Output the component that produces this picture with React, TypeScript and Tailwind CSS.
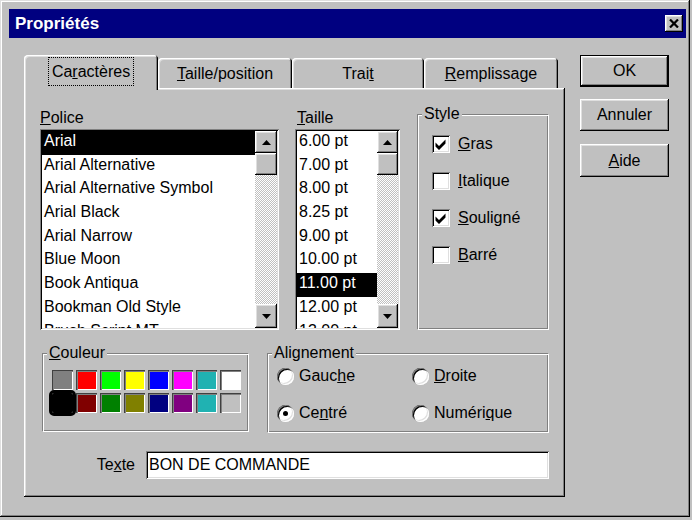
import React from 'react';

const raised =
    'shadow-[inset_-1px_-1px_0_#000,inset_1px_1px_0_#fff,inset_-2px_-2px_0_#808080,inset_2px_2px_0_#dfdfdf]';
const sunken =
    'shadow-[inset_1px_1px_0_#808080,inset_-1px_-1px_0_#fff,inset_2px_2px_0_#000,inset_-2px_-2px_0_#dfdfdf]';
const etched =
    'border border-[#808080] border-b-white border-r-white shadow-[inset_1px_1px_0_#fff,inset_-1px_-1px_0_#808080]';
const tabEdge =
    'shadow-[inset_1px_1px_0_#fff,inset_-1px_0_0_#000,inset_2px_2px_0_#dfdfdf,inset_-2px_0_0_#808080]';

const fonts = [
    'Arial',
    'Arial Alternative',
    'Arial Alternative Symbol',
    'Arial Black',
    'Arial Narrow',
    'Blue Moon',
    'Book Antiqua',
    'Bookman Old Style',
    'Brush Script MT',
];

const sizes = [
    '6.00 pt',
    '7.00 pt',
    '8.00 pt',
    '8.25 pt',
    '9.00 pt',
    '10.00 pt',
    '11.00 pt',
    '12.00 pt',
    '13.00 pt',
];

const palette = [
    '#808080', '#ff0000', '#00ff00', '#ffff00', '#0000ff', '#ff00ff', '#20b2b2', '#ffffff',
    '#000000', '#800000', '#008000', '#808000', '#000080', '#800080', '#20b2b2', '#c0c0c0',
];

const Arrow = ({ down }: { down?: boolean }) => (
    <svg width="9" height="5" viewBox="0 0 9 5">
        <polygon points={down ? '0,0 9,0 4.5,5' : '4.5,0 9,5 0,5'} fill="#000" />
    </svg>
);

const ScrollBar = ({ className }: { className: string }) => (
    <div className={`flex flex-col ${className}`}>
        <div className={`flex h-[22px] items-center justify-center bg-[#c0c0c0] ${raised}`}>
            <Arrow />
        </div>
        <div className={`h-[22px] bg-[#c0c0c0] ${raised}`} />
        <div className="flex-1 bg-[repeating-conic-gradient(#c0c0c0_0_25%,#ffffff_0_50%)] bg-[length:2px_2px]" />
        <div className={`flex h-[24px] items-center justify-center bg-[#c0c0c0] ${raised}`}>
            <Arrow down />
        </div>
    </div>
);

const ListBox = ({
    items,
    selected,
    barClass,
}: {
    items: string[];
    selected: number;
    barClass: string;
}) => (
    <div className={`flex h-[201px] bg-white p-[2px] ${sunken}`}>
        <div className="flex-1 overflow-hidden">
            {items.map((item, i) => (
                <div
                    key={item}
                    className={`h-[23.7px] whitespace-nowrap pl-[2px] leading-[20px] ${
                        i === selected ? 'bg-black text-white' : ''
                    }`}
                >
                    {item}
                </div>
            ))}
        </div>
        <ScrollBar className={barClass} />
    </div>
);

const Group = ({
    label,
    className,
    frameClass,
    children,
}: {
    label: React.ReactNode;
    className: string;
    frameClass: string;
    children: React.ReactNode;
}) => (
    <div className={`flex flex-col ${className}`}>
        <span className="relative z-10 -mb-[9px] ml-[5px] w-fit bg-[#c0c0c0] px-[2px] leading-[18px]">
            {label}
        </span>
        <div className={`${etched} ${frameClass}`}>{children}</div>
    </div>
);

const Check = ({ checked, children }: { checked?: boolean; children: React.ReactNode }) => (
    <div className="flex h-[18px] items-center gap-[8px]">
        <span className={`flex h-[18px] w-[18px] bg-white ${sunken}`}>
            {checked && (
                <svg width="18" height="18" viewBox="0 0 18 18">
                    <polygon points="3.5,7.5 7,11 13.5,4.5 13.5,8.5 7,15 3.5,11.5" fill="#000" />
                </svg>
            )}
        </span>
        <span className="leading-[18px]">{children}</span>
    </div>
);

const Radio = ({ checked, children }: { checked?: boolean; children: React.ReactNode }) => (
    <div className="flex h-[20px] items-center gap-[5px]">
        <span className={`flex h-[17px] w-[17px] items-center justify-center rounded-full bg-white ${sunken}`}>
            {checked && <span className="h-[5px] w-[5px] rounded-full bg-black" />}
        </span>
        <span className="leading-[18px]">{children}</span>
    </div>
);

const Tab = ({ className, children }: { className: string; children: React.ReactNode }) => (
    <div
        className={`flex h-[30px] justify-center rounded-t-[4px] bg-[#c0c0c0] pt-[2px] leading-[28px] ${tabEdge} ${className}`}
    >
        {children}
    </div>
);

const Button = ({
    isDefault,
    className,
    children,
}: {
    isDefault?: boolean;
    className: string;
    children: React.ReactNode;
}) => (
    <button
        className={`w-[89px] bg-[#c0c0c0] text-center ${isDefault ? 'border border-black' : ''} ${raised} ${className}`}
    >
        {children}
    </button>
);

const App = () => {
    return (
        <div className="h-[520px] w-[692px] bg-[#c0c0c0] font-['Liberation_Sans',Arial,sans-serif] text-[16px] text-black">
            <div
                className={`h-[517px] w-[690px] pl-[9px] pr-[4px] pt-[9px] shadow-[inset_-1px_-1px_0_#000,inset_1px_1px_0_#dfdfdf,inset_-2px_-2px_0_#808080,inset_2px_2px_0_#fff]`}
            >
                {/* Title bar */}
                <div className="flex h-[29px] items-center justify-between bg-[#000080] pl-[6px] pr-[3px]">
                    <span className="text-[17px] font-bold text-white">Propriétés</span>
                    <span className={`flex h-[17px] w-[18px] items-center justify-center bg-[#c0c0c0] ${raised}`}>
                        <svg width="10" height="9" viewBox="0 0 10 9">
                            <path d="M1 0.5 L9 8.5 M9 0.5 L1 8.5" stroke="#000" strokeWidth="2.2" />
                        </svg>
                    </span>
                </div>

                <div className="flex pl-[15px] pt-[17px]">
                    {/* Tab control */}
                    <div className="w-[541px]">
                        <div className="flex h-[33px] items-end">
                            <div
                                className={`relative z-10 -mb-[2px] flex h-[35px] w-[134px] justify-center rounded-t-[4px] bg-[#c0c0c0] pt-[2px] ${tabEdge}`}
                            >
                                <span className="h-[29px] border border-dotted border-black px-[3px] leading-[27px]">
                                    Ca<u>r</u>actères
                                </span>
                            </div>
                            <Tab className="w-[134px]">
                                <span>
                                    <u>T</u>aille/position
                                </span>
                            </Tab>
                            <Tab className="w-[132px]">
                                <span>
                                    Trai<u>t</u>
                                </span>
                            </Tab>
                            <Tab className="w-[134px]">
                                <span>
                                    <u>R</u>emplissage
                                </span>
                            </Tab>
                        </div>

                        <div className={`h-[409px] bg-[#c0c0c0] px-[16px] pt-[17px] ${raised}`}>
                            <div className="flex items-start">
                                <div className="mt-[4px] w-[239px]">
                                    <div className="mb-[2px] leading-[18px]">
                                        <u>P</u>olice
                                    </div>
                                    <ListBox items={fonts} selected={0} barClass="w-[22px]" />
                                </div>
                                <div className="ml-[16px] mt-[4px] w-[105px]">
                                    <div className="mb-[2px] pl-[2px] leading-[18px]">
                                        <u>T</u>aille
                                    </div>
                                    <ListBox items={sizes} selected={6} barClass="w-[21px]" />
                                </div>
                                <Group label="Style" className="ml-[17px] w-[132px]" frameClass="h-[216px]">
                                    <div className="flex flex-col gap-[19px] pl-[14px] pt-[20px]">
                                        <Check checked>
                                            <u>G</u>ras
                                        </Check>
                                        <Check>
                                            <u>I</u>talique
                                        </Check>
                                        <Check checked>
                                            <u>S</u>ouligné
                                        </Check>
                                        <Check>
                                            <u>B</u>arré
                                        </Check>
                                    </div>
                                </Group>
                            </div>

                            <div className="mt-[14px] flex items-start">
                                <Group
                                    label={
                                        <>
                                            <u>C</u>ouleur
                                        </>
                                    }
                                    className="ml-[2px] w-[207px]"
                                    frameClass="h-[79px]"
                                >
                                    <div className="grid grid-cols-[repeat(8,21px)] gap-[3px] pl-[9px] pt-[16px]">
                                        {palette.map((color, i) => (
                                            <span
                                                key={i}
                                                className={`h-[20px] w-[21px] ${
                                                    i === 8
                                                        ? 'rounded-[2px] outline-[3px] outline-black'
                                                        : 'shadow-[inset_1px_1px_0_#404040,inset_2px_2px_0_#808080,inset_-1px_-1px_0_#fff]'
                                                }`}
                                                style={{ backgroundColor: color }}
                                            />
                                        ))}
                                    </div>
                                </Group>
                                <Group label="Alignement" className="ml-[18px] w-[282px]" frameClass="h-[80px]">
                                    <div className="grid grid-cols-[135px_1fr] gap-y-[17px] pl-[9px] pt-[12px]">
                                        <Radio>
                                            Gauc<u>h</u>e
                                        </Radio>
                                        <Radio>
                                            <u>D</u>roite
                                        </Radio>
                                        <Radio checked>
                                            Ce<u>n</u>tré
                                        </Radio>
                                        <Radio>
                                            Numéri<u>q</u>ue
                                        </Radio>
                                    </div>
                                </Group>
                            </div>

                            <div className="mt-[18px] flex items-center justify-end gap-[11px]">
                                <span>
                                    Te<u>x</u>te
                                </span>
                                <div
                                    className={`h-[28px] w-[403px] bg-white pl-[3px] pt-[2px] leading-[24px] ${sunken}`}
                                >
                                    BON DE COMMANDE
                                </div>
                            </div>
                        </div>
                    </div>

                    {/* Buttons */}
                    <div className="ml-[15px] flex flex-col gap-[12px]">
                        <Button isDefault className="h-[32px]">
                            OK
                        </Button>
                        <Button className="h-[32px]">Annuler</Button>
                        <Button className="mt-[1px] h-[33px]">
                            <u>A</u>ide
                        </Button>
                    </div>
                </div>
            </div>
        </div>
    );
};

export default App;
